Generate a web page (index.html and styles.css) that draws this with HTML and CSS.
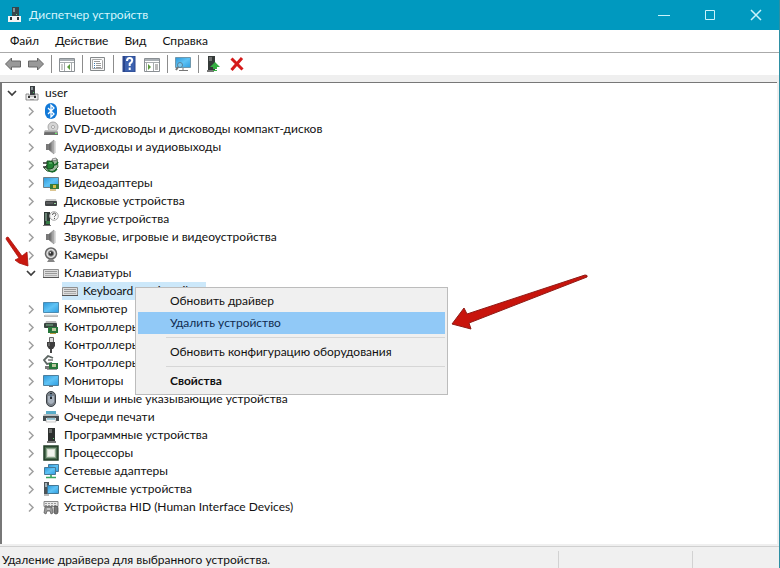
FILE: index.html
```html
<!DOCTYPE html>
<html lang="ru">
<head>
<meta charset="utf-8">
<meta name="viewport" content="width=device-width, initial-scale=1">
<title>Диспетчер устройств</title>
<link rel="stylesheet" href="styles.css">
</head>
<body>
<svg class="sprite" aria-hidden="true">
  <defs>
    <linearGradient id="screen" x1="0" y1="0" x2="1" y2="1"><stop offset="0" stop-color="#2b96d8"/><stop offset=".5" stop-color="#5fc3f5"/><stop offset="1" stop-color="#2f9de0"/></linearGradient>
    <linearGradient id="metal" x1="0" y1="0" x2="0" y2="1"><stop offset="0" stop-color="#c8c8c8"/><stop offset="1" stop-color="#666"/></linearGradient>
    <linearGradient id="cone" x1="0" y1="0" x2="1" y2="0"><stop offset="0" stop-color="#555"/><stop offset="1" stop-color="#c4c4c4"/></linearGradient>
  </defs>
  <symbol id="chevron" viewBox="0 0 16 16"><path d="M6 4.500l4 4-4 4" fill="none" stroke="#a0a0a0" stroke-width="1.500"/></symbol>
  <symbol id="chevron-open" viewBox="0 0 16 16"><path d="M4 6l4 4 4-4" fill="none" stroke="#3c3c3c" stroke-width="1.700"/></symbol>
  <symbol id="pc" viewBox="0 0 16 16"><path d="M6 1h5v9H6z" fill="#3b4043"/><path d="M7 2h2v3H7z" fill="#8d9598"/><path d="M9 7h1v1H9z" fill="#58c268"/><path d="M2 9h3v2h6V9h3v6H2z" fill="#eee" stroke="#777" stroke-width=".8"/><path d="M4 11h2v2H4zM10 11h2v2h-2z" fill="#333"/><path d="M6 14h4v1H6z" fill="#999"/></symbol>
  <symbol id="bluetooth" viewBox="0 0 16 16"><rect x="2" y="0" width="12" height="16" rx="6" fill="#1279d8"/><path d="M5 5l6 6-3 3V2l3 3-6 6" fill="none" stroke="#fff" stroke-width="1.300"/></symbol>
  <symbol id="dvd" viewBox="0 0 16 16"><ellipse cx="10" cy="6" rx="5" ry="5" fill="#d5d5d5" stroke="#999" stroke-width=".8"/><circle cx="10" cy="6" r="1.500" fill="#fff" stroke="#888" stroke-width=".7"/><path d="M2 9h12l1 2v3H1v-3z" fill="url(#metal)"/><path d="M2 12h10" stroke="#555"/><path d="M12 12h2v1h-2z" fill="#6e6"/></symbol>
  <symbol id="speaker" viewBox="0 0 16 16"><path d="M3 5h3v6H3z" fill="#777"/><path d="M6 5l5-4v14l-5-4z" fill="url(#cone)" stroke="#888" stroke-width=".6"/><path d="M12 2v12" stroke="#bbb"/></symbol>
  <symbol id="battery" viewBox="0 0 16 16"><path d="M8 4l6-2 1 8-5 5-6-1-3-3z" fill="#9bb79b" stroke="#3f6541"/><path d="M9 2l4-1 1 2-4 1z" fill="#ddd" stroke="#555" stroke-width=".6"/><path d="M0 6h5M0 10h5" stroke="#333" stroke-width="1.500"/><path d="M4 4h3q4 0 4 4t-4 4H4z" fill="#228333" stroke="#174d20"/><path d="M10 8q4 0 5-3M5 13q5 4 9-1" fill="none" stroke="#176b29" stroke-width="1.500"/><path d="M6 6h3" stroke="#7bc785"/></symbol>
  <symbol id="display" viewBox="0 0 16 16"><path d="M.5 2.500h15v10H.5z" fill="url(#screen)" stroke="#6e7f88"/><path d="M7 9h9v5H7z" fill="#397b3b"/><path d="M10 10h3v3h-3z" fill="#d8bd45"/><path d="M7 15h6" stroke="#b98b24"/></symbol>
  <symbol id="disk" viewBox="0 0 16 16"><path d="M3 6h10l1 3H2z" fill="#c6c6c6"/><rect x="2" y="8" width="12" height="5" rx="1" fill="#3f4344"/><path d="M3 10h7" stroke="#777"/><path d="M11 10h2v1h-2z" fill="#9bd6a0"/></symbol>
  <symbol id="other" viewBox="0 0 16 16"><path d="M1 1h6v13H1z" fill="#2f3935"/><path d="M2 2h2v8H2z" fill="#688173"/><path d="M3 10h4v3H3z" fill="#367b45"/><path d="M0 14h8v1H0z" fill="#777"/><circle cx="11" cy="5" r="4.300" fill="#f7f7f7" stroke="#aaa"/><path d="M9.500 4q0-2 1.700-2 1.600 0 1.600 1.500 0 1-1.300 2v.6M11.500 7v1" stroke="#555" fill="none"/></symbol>
  <symbol id="camera" viewBox="0 0 16 16"><circle cx="8" cy="6.500" r="5.500" fill="#ddd" stroke="#666" stroke-width="1.500"/><circle cx="8" cy="6.500" r="2.700" fill="#343434" stroke="#888"/><circle cx="7.300" cy="5.700" r=".8" fill="#fff"/><path d="M6 12h4l2 3H4z" fill="#858585"/></symbol>
  <symbol id="keyboard" viewBox="0 0 16 16"><path d="M0.500 4.500h15v8H.5z" fill="#ddd" stroke="#909090"/><path d="M2 6.500h12M2 8.500h12" stroke="#999"/><path d="M2 10.500h12" stroke="#b0b0b0"/><path d="M0 12.500h16" stroke="#555"/></symbol>
  <symbol id="computer" viewBox="0 0 16 16"><path d="M.5 1.500h15v10H.5z" fill="url(#screen)" stroke="#4d8cb2"/><path d="M1 15h14" stroke="#777"/><path d="M2 14h12" stroke="#ddd"/></symbol>
  <symbol id="monitor" viewBox="0 0 16 16"><path d="M.5 2.500h15v10H.5z" fill="url(#screen)" stroke="#4d7f9d"/><path d="M6 13h4v1H6z" fill="#777"/></symbol>
  <symbol id="storage" viewBox="0 0 16 16"><path d="M3 2h10l1 3H2z" fill="#bbb"/><rect x="1" y="4" width="13" height="5" rx="1" fill="#394540"/><path d="M3 6h7" stroke="#7db58b"/><path d="M5 8h10v6H5z" fill="#26763a"/><path d="M9 9h4v3H9z" fill="#b9c89d"/><path d="M7 14.500h6" stroke="#b59539"/></symbol>
  <symbol id="usb" viewBox="0 0 16 16"><path d="M6.500 .5h4v5h-4z" fill="#ddd" stroke="#666"/><path d="M4 5h8v4l-2 3H6L4 9z" fill="#3e3e3e"/><path d="M6 6v3" stroke="#888"/><path d="M8 12v4" stroke="#444" stroke-width="2"/></symbol>
  <symbol id="controller" viewBox="0 0 16 16"><path d="M10 3L5 1 1 5l3 4 5-1" fill="none" stroke="#5d6663" stroke-width="1.800"/><path d="M5 5h5" stroke="#777" stroke-width="1.500"/><path d="M2 11h5v3H2z" fill="#777"/><path d="M6 8h9v6H6z" fill="#26763a"/><path d="M9 9h4v3H9z" fill="#b9c89d"/><path d="M4 14.500h10" stroke="#999"/></symbol>
  <symbol id="mouse" viewBox="0 0 16 16"><rect x="3.500" y=".5" width="9" height="15" rx="4.500" fill="#7a828a" stroke="#3b4045"/><path d="M5 5v6q3 4 6 0V5" fill="#a8b2be"/><path d="M8 2v6" stroke="#252a30" stroke-width="2"/><path d="M8 3v3" stroke="#9cc4e8"/></symbol>
  <symbol id="printer" viewBox="0 0 16 16"><path d="M3 2h10v4H3z" fill="#58acc8"/><path d="M0 7h16v5h-3V9H3v3H0z" fill="#454d50"/><path d="M1 5h14l1 2H0z" fill="#b9bfc1"/><path d="M4 9h8l1 4H3z" fill="#f8f8f8" stroke="#aaa" stroke-width=".6"/><path d="M4 10h8" stroke="#4ca2be"/></symbol>
  <symbol id="software" viewBox="0 0 16 16"><rect x="5" y="1" width="7" height="13" fill="#2d302f"/><path d="M6 3h3M6 5h3" stroke="#aaa"/><path d="M10 11h1v1h-1z" fill="#65d17a"/><path d="M4 14h9v2H4z" fill="#777"/></symbol>
  <symbol id="cpu" viewBox="0 0 16 16"><path d="M1 1h14v14H1z" fill="#4b6b4f" stroke="#213d26" stroke-width="1.500"/><path d="M3.500 3.500h9v9h-9z" fill="#d8ded1" stroke="#8aa58c"/><path d="M5 5h6v6H5z" fill="#f1f3ed"/></symbol>
  <symbol id="network" viewBox="0 0 16 16"><path d="M5.500 1.500h10v7h-10z" fill="url(#screen)" stroke="#477998"/><path d="M1.500 4.500h11v7h-11z" fill="url(#screen)" stroke="#477998"/><path d="M8 12v2M3 14.500h10" stroke="#38a55c" stroke-width="1.600"/></symbol>
  <symbol id="system" viewBox="0 0 16 16"><path d="M1 1h5v12H1z" fill="#4c5458"/><path d="M2 2h2v4H2z" fill="#a4b1b7"/><path d="M4.500 4.500h11v8h-11z" fill="url(#screen)" stroke="#447895"/><path d="M1 14h5" stroke="#777"/></symbol>
  <symbol id="hid" viewBox="0 0 16 16"><path d="M1 2.500h14v5H1z" fill="#e8e8e8" stroke="#888"/><path d="M2 4.500h12M2 6.500h12" stroke="#999" stroke-dasharray="2 1"/><path d="M1 14l1-6h7l1 6-2 1-1-3H4l-1 3z" fill="#999" stroke="#555" stroke-width=".7"/><rect x="11" y="7" width="4" height="8" rx="2" fill="#777" stroke="#444" stroke-width=".7"/><path d="M4 10h3" stroke="#eee"/></symbol>
</svg>

<header class="titlebar">
  <svg class="icon app-icon" viewBox="0 0 16 16" aria-hidden="true"><path d="M5 0h7v10H5z" fill="#35464c"/><path d="M6 1h2v4H6z" fill="#849297"/><path d="M9 7h1v1H9z" fill="#67d778"/><path d="M1 9h13v6H1z" fill="#f3f3f3"/><path d="M3 10h2v3H3zM10 10h2v3h-2z" fill="#26363b"/></svg>
  <h1>Диспетчер устройств</h1>
  <div class="window-controls">
    <button type="button" aria-label="Свернуть"><svg class="icon" viewBox="0 0 16 16"><path d="M2 8.500h12"/></svg></button>
    <button type="button" aria-label="Развернуть"><svg class="icon" viewBox="0 0 16 16"><path d="M3.500 3.500h9v9h-9z"/></svg></button>
    <button type="button" aria-label="Закрыть"><svg class="icon" viewBox="0 0 16 16"><path d="M3 3l10 10M13 3L3 13" stroke-width="1.500"/></svg></button>
  </div>
</header>

<nav class="menubar" aria-label="Главное меню">
  <button type="button">Файл</button>
  <button type="button">Действие</button>
  <button type="button">Вид</button>
  <button type="button">Справка</button>
</nav>

<div class="toolbar" role="toolbar" aria-label="Панель инструментов">
  <button type="button" aria-label="Назад"><svg class="icon" viewBox="0 0 16 16"><path d="M0.500 8l6-6v3h9v6h-9v3z" fill="#999" stroke="#666"/></svg></button>
  <button type="button" aria-label="Вперед"><svg class="icon" viewBox="0 0 16 16"><path d="M15.500 8l-6-6v3h-9v6h9v3z" fill="#999" stroke="#666"/></svg></button>
  <span class="separator"></span>
  <button type="button" aria-label="Показать дерево"><svg class="icon" viewBox="0 0 16 16"><path d="M.5 2.500h15v13H.5z" fill="#fff" stroke="#8a8f93"/><path d="M1 3h14v2H1z" fill="#aab0b5"/><path d="M1 6.500h14M5.500 7v8M12.500 7v8" stroke="#a6abad"/><path d="M2 9h2M2 11h2M2 13h2" stroke="#999"/><path d="M11 8v6l-3-3z" fill="#5b9b3e"/></svg></button>
  <span class="separator"></span>
  <button type="button" aria-label="Свойства"><svg class="icon" viewBox="0 0 16 16"><path d="M.5 1.500h14v13H.5z" fill="#f6f6f6" stroke="#85898b"/><path d="M2.500 3.500h9l1 1v8h-10z" fill="#fff" stroke="#aaa"/><path d="M4 5.500h6M6 7.500h5M6 9.500h5M6 11.500h5" stroke="#999"/><path d="M4 7.500h1M4 9.500h1M4 11.500h1" stroke="#397bb4"/></svg></button>
  <span class="separator"></span>
  <button type="button" aria-label="Справка"><svg class="icon" viewBox="0 0 16 16"><path d="M2 0h12v16H2z" fill="#3d62af" stroke="#2b468d"/><path d="M2 0h2v16H2z" fill="#2b468d"/><path d="M6 5q0-3 2.700-3 2.500 0 2.500 2.500 0 1.500-2.500 3.200V10M8.700 11.500V14" fill="none" stroke="#fff" stroke-width="2"/></svg></button>
  <button type="button" aria-label="Панель действий"><svg class="icon" viewBox="0 0 16 16"><path d="M.5 2.500h15v13H.5z" fill="#fff" stroke="#8a8f93"/><path d="M1 3h14v2H1z" fill="#aab0b5"/><path d="M1 6.500h14M2.500 7v8M9.500 7v8" stroke="#a6abad"/><path d="M11 9h3M11 11h3M11 13h3" stroke="#777"/><path d="M4 8v6l3-3z" fill="#5b9b3e"/></svg></button>
  <span class="separator"></span>
  <button type="button" aria-label="Обновить конфигурацию"><svg class="icon" viewBox="0 0 16 16"><path d="M.5 1.500h15v10H.5z" fill="url(#screen)" stroke="#6f98ad"/><path d="M8 12v2M4 14.500h9" stroke="#777"/><circle cx="5" cy="9" r="2.500" fill="#79c9ef" stroke="#58809a"/><path d="M3 11l-2 3" stroke="#777" stroke-width="2"/></svg></button>
  <span class="separator"></span>
  <button type="button" aria-label="Обновить драйвер"><svg class="icon" viewBox="0 0 16 16"><path d="M2 0h7v14H2z" fill="#343a38"/><path d="M3 2h3M3 4h3" stroke="#aaa"/><path d="M1 14h7v2H1z" fill="#777"/><path d="M9 6l5 5h-3v2H7v-2H4z" fill="#36ae42"/><path d="M7 14.500h4" stroke="#36ae42"/></svg></button>
  <button type="button" aria-label="Удалить устройство"><svg class="icon" viewBox="0 0 16 16"><path d="M2.500 2.500l11 11M13 2L2.500 14" stroke="#d51b1b" stroke-width="3"/></svg></button>
</div>

<main class="workspace">
  <ul class="tree" id="tree" aria-label="Устройства">
    <li class="row root"><button type="button" aria-label="Свернуть"><svg class="icon"><use href="#chevron-open"/></svg></button><svg class="icon"><use href="#pc"/></svg><span>user</span></li>
    <li class="row"><button type="button" aria-label="Развернуть"><svg class="icon"><use href="#chevron"/></svg></button><svg class="icon"><use href="#bluetooth"/></svg><span>Bluetooth</span></li>
    <li class="row"><button type="button" aria-label="Развернуть"><svg class="icon"><use href="#chevron"/></svg></button><svg class="icon"><use href="#dvd"/></svg><span>DVD-дисководы и дисководы компакт-дисков</span></li>
    <li class="row"><button type="button" aria-label="Развернуть"><svg class="icon"><use href="#chevron"/></svg></button><svg class="icon"><use href="#speaker"/></svg><span>Аудиовходы и аудиовыходы</span></li>
    <li class="row"><button type="button" aria-label="Развернуть"><svg class="icon"><use href="#chevron"/></svg></button><svg class="icon"><use href="#battery"/></svg><span>Батареи</span></li>
    <li class="row"><button type="button" aria-label="Развернуть"><svg class="icon"><use href="#chevron"/></svg></button><svg class="icon"><use href="#display"/></svg><span>Видеоадаптеры</span></li>
    <li class="row"><button type="button" aria-label="Развернуть"><svg class="icon"><use href="#chevron"/></svg></button><svg class="icon"><use href="#disk"/></svg><span>Дисковые устройства</span></li>
    <li class="row"><button type="button" aria-label="Развернуть"><svg class="icon"><use href="#chevron"/></svg></button><svg class="icon"><use href="#other"/></svg><span>Другие устройства</span></li>
    <li class="row"><button type="button" aria-label="Развернуть"><svg class="icon"><use href="#chevron"/></svg></button><svg class="icon"><use href="#speaker"/></svg><span>Звуковые, игровые и видеоустройства</span></li>
    <li class="row"><button type="button" aria-label="Развернуть"><svg class="icon"><use href="#chevron"/></svg></button><svg class="icon"><use href="#camera"/></svg><span>Камеры</span></li>
    <li class="row"><button type="button" aria-label="Свернуть"><svg class="icon"><use href="#chevron-open"/></svg></button><svg class="icon"><use href="#keyboard"/></svg><span>Клавиатуры</span></li>
    <li class="row child"><div class="selected"><svg class="icon"><use href="#keyboard"/></svg><span>Keyboard Device Filter</span></div></li>
    <li class="row"><button type="button" aria-label="Развернуть"><svg class="icon"><use href="#chevron"/></svg></button><svg class="icon"><use href="#computer"/></svg><span>Компьютер</span></li>
    <li class="row"><button type="button" aria-label="Развернуть"><svg class="icon"><use href="#chevron"/></svg></button><svg class="icon"><use href="#storage"/></svg><span>Контроллеры</span></li>
    <li class="row"><button type="button" aria-label="Развернуть"><svg class="icon"><use href="#chevron"/></svg></button><svg class="icon"><use href="#usb"/></svg><span>Контроллеры</span></li>
    <li class="row"><button type="button" aria-label="Развернуть"><svg class="icon"><use href="#chevron"/></svg></button><svg class="icon"><use href="#controller"/></svg><span>Контроллеры</span></li>
    <li class="row"><button type="button" aria-label="Развернуть"><svg class="icon"><use href="#chevron"/></svg></button><svg class="icon"><use href="#monitor"/></svg><span>Мониторы</span></li>
    <li class="row"><button type="button" aria-label="Развернуть"><svg class="icon"><use href="#chevron"/></svg></button><svg class="icon"><use href="#mouse"/></svg><span>Мыши и иные указывающие устройства</span></li>
    <li class="row"><button type="button" aria-label="Развернуть"><svg class="icon"><use href="#chevron"/></svg></button><svg class="icon"><use href="#printer"/></svg><span>Очереди печати</span></li>
    <li class="row"><button type="button" aria-label="Развернуть"><svg class="icon"><use href="#chevron"/></svg></button><svg class="icon"><use href="#software"/></svg><span>Программные устройства</span></li>
    <li class="row"><button type="button" aria-label="Развернуть"><svg class="icon"><use href="#chevron"/></svg></button><svg class="icon"><use href="#cpu"/></svg><span>Процессоры</span></li>
    <li class="row"><button type="button" aria-label="Развернуть"><svg class="icon"><use href="#chevron"/></svg></button><svg class="icon"><use href="#network"/></svg><span>Сетевые адаптеры</span></li>
    <li class="row"><button type="button" aria-label="Развернуть"><svg class="icon"><use href="#chevron"/></svg></button><svg class="icon"><use href="#system"/></svg><span>Системные устройства</span></li>
    <li class="row"><button type="button" aria-label="Развернуть"><svg class="icon"><use href="#chevron"/></svg></button><svg class="icon"><use href="#hid"/></svg><span>Устройства HID (Human Interface Devices)</span></li>
  </ul>
</main>

<footer class="statusbar">
  <p>Удаление драйвера для выбранного устройства.</p>
  <span class="status-middle"></span>
  <span class="status-end"></span>
</footer>

<div class="context-menu" aria-label="Действия с устройством">
  <button type="button">Обновить драйвер</button>
  <button type="button" class="active">Удалить устройство</button>
  <hr>
  <button type="button">Обновить конфигурацию оборудования</button>
  <hr>
  <button type="button" class="default">Свойства</button>
</div>

<svg class="pointer pointer-small" viewBox="0 0 26 32" aria-hidden="true"><path d="M3 1l14 19 5-4 1 14-9-3-4-3 4-2L1 3q0-2 2-2z" fill="#c9180f" stroke="#a8130c" stroke-width=".8"/></svg>
<svg class="pointer pointer-large" viewBox="0 0 140 60" aria-hidden="true"><path d="M2 51l12-16 3 6L135 2q3 0 2 2L19 50l2 6z" fill="#c8140c" stroke="#8f1b16"/></svg>
</body>
</html>
```
FILE: styles.css
```css
* {
  box-sizing: border-box;
}

body {
  display: flex;
  flex-direction: column;
  min-height: 100vh;
  margin: 0;
  border-right: 1px solid #2e8fa3;
  background: #fff;
  color: #111;
  font: 12px/18px Lato, "Open Sans", sans-serif;
}

button {
  padding: 0;
  border: 0;
  background: none;
  color: inherit;
  font: inherit;
}

.sprite {
  position: absolute;
  width: 0;
  height: 0;
}

.icon {
  display: block;
  flex: none;
  width: 16px;
  height: 16px;
}

.titlebar {
  display: flex;
  align-items: center;
  height: 30px;
  margin-right: -1px;
  padding-left: 7px;
  background: #0099bf;
  color: #d5f5fc;
}

.titlebar h1 {
  flex: 1;
  margin: 0;
  padding-left: 6px;
  font-size: 12px;
  font-weight: 400;
}

.window-controls {
  display: flex;
  padding-right: 1px;
}

.window-controls button {
  display: grid;
  place-items: center;
  width: 46px;
  height: 28px;
}

.window-controls path {
  fill: none;
  stroke: #c9f3fb;
}

.menubar {
  display: flex;
  gap: 16px;
  height: 23px;
  padding: 0 10px;
  border-bottom: 1px solid #aaa;
}

.toolbar {
  display: flex;
  align-items: center;
  height: 22px;
  padding-left: 1px;
}

.toolbar button {
  display: grid;
  place-items: center;
  width: 23px;
  height: 22px;
}

.separator {
  width: 8px;
  height: 18px;
  background: linear-gradient(#8c8c8c, #8c8c8c) center / 1px 100% no-repeat;
}

.workspace {
  flex: 1;
  padding: 7px 2px 2px 0;
  background: #efefef;
}

.tree {
  height: 100%;
  margin: 0;
  padding: 1px 0 28px;
  border: solid #777;
  border-width: 1px 0 0 2px;
  background: #fff;
  list-style: none;
}

.row {
  display: flex;
  align-items: center;
  height: 18px;
  padding-left: 21px;
  white-space: nowrap;
}

.row.root {
  padding-left: 2px;
}

.row.child {
  padding-left: 60px;
}

.row button {
  margin-right: 4px;
}

.row span {
  padding-left: 5px;
}

.selected {
  display: flex;
  align-items: center;
  height: 18px;
  padding-right: 3px;
  background: #cce8fa;
}

.statusbar {
  display: grid;
  grid-template-columns: 1fr 134px 87px;
  height: 22px;
  border-top: 1px solid #d0d0d0;
  background: #f0f0f0;
}

.statusbar p {
  margin: 0;
  padding: 4px 2px 0;
}

.statusbar span {
  margin-top: 4px;
  border-left: 1px solid #d2d2d2;
}

.context-menu {
  position: absolute;
  top: 287px;
  left: 135px;
  display: flex;
  flex-direction: column;
  width: 313px;
  padding: 2px;
  border: 1px solid #bcbcbc;
  background: #f0f0f0;
}

.context-menu button {
  height: 22px;
  padding-left: 32px;
  text-align: left;
}

.context-menu .active {
  background: #91c9f7;
  color: #102c50;
}

.context-menu .default {
  font-weight: 700;
}

.context-menu hr {
  width: calc(100% - 28px);
  height: 1px;
  margin: 3px 0 3px 28px;
  border: 0;
  background: #d6d6d6;
}

.pointer {
  position: absolute;
  pointer-events: none;
}

.pointer-small {
  top: 236px;
  left: 5px;
  width: 26px;
  height: 32px;
}

.pointer-large {
  top: 273px;
  left: 450px;
  width: 140px;
  height: 60px;
}
```
